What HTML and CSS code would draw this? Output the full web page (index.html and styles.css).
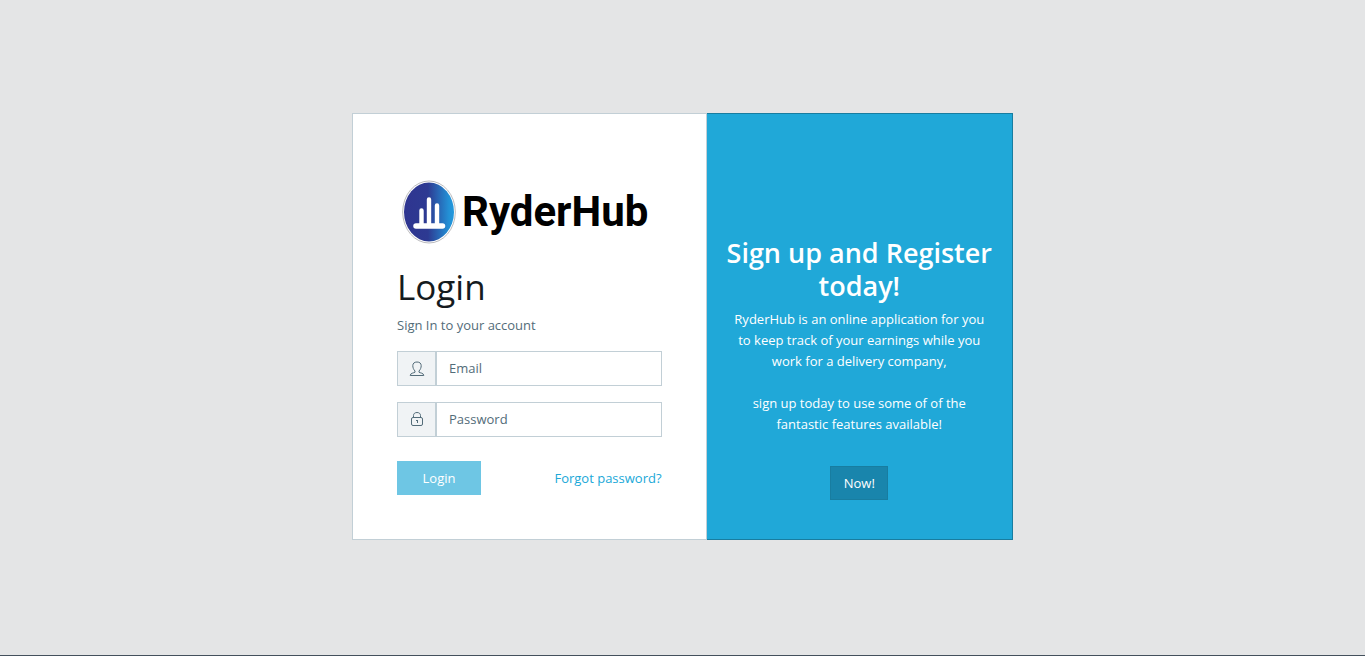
FILE: index.html
```html
<!DOCTYPE html>
<html lang="en">
<head>
<meta charset="utf-8">
<meta name="viewport" content="width=device-width, initial-scale=1">
<title>RyderHub - Login</title>
<link rel="stylesheet" href="styles.css">
</head>
<body>
<main class="page">
  <div class="card-group">
    <section class="card card-login">
      <div class="brand">
        <svg class="brand-mark" viewBox="0 0 54 64" aria-hidden="true">
          <defs>
            <linearGradient id="mark" x1="0" x2="1" y1="0" y2="0">
              <stop offset="0" stop-color="#2f3590"/>
              <stop offset=".48" stop-color="#2d3a92"/>
              <stop offset=".9" stop-color="#2391d6"/>
              <stop offset="1" stop-color="#2398dc"/>
            </linearGradient>
          </defs>
          <ellipse cx="27" cy="32" rx="26.3" ry="31" fill="#fff" stroke="#a9a9ad" stroke-width=".8"/>
          <ellipse cx="27" cy="32" rx="25" ry="29.5" fill="url(#mark)"/>
          <path d="M14 46H40.500" stroke="#fff" stroke-width="5.500" stroke-linecap="round"/>
          <path d="M19.500 45V30.500M27 45V19.500M35 45V25.500" stroke="#fff" stroke-width="4.400" stroke-linecap="round"/>
        </svg>
        <span class="brand-name">RyderHub</span>
      </div>
      <form class="login-form">
        <h1 class="title">Login</h1>
        <p class="subtitle">Sign In to your account</p>
        <div class="input-group">
          <label class="addon" for="email" aria-label="Email">
            <svg class="icon" viewBox="0 0 16 16" aria-hidden="true"><path d="M6 10C4.500 8.500 3.800 6.500 3.800 4.700C3.800 2.300 5.400 1 8 1S12.200 2.300 12.200 4.700C12.200 6.500 11.500 8.500 10 10V11.200C11 12 14.800 12 14.800 14.500H1.200C1.200 12 5 12 6 11.200Z"/></svg>
          </label>
          <input class="field" id="email" type="email" placeholder="Email">
        </div>
        <div class="input-group">
          <label class="addon" for="password" aria-label="Password">
            <svg class="icon" viewBox="0 0 16 16" aria-hidden="true"><rect x="2.500" y="5.500" width="11" height="8" rx="1.500"/><path d="M4.500 5.500V3.500C4.500 1.500 6 .500 8 .500S11.500 1.500 11.500 3.500V5.500M8.500 8V11M7 8.500H9"/></svg>
          </label>
          <input class="field" id="password" type="password" placeholder="Password">
        </div>
        <div class="actions">
          <button class="btn btn-login" type="submit" disabled>Login</button>
          <a class="forgot" href="#">Forgot password?</a>
        </div>
      </form>
    </section>
    <section class="card card-signup">
      <h2 class="signup-title">Sign up and Register today!</h2>
      <p class="signup-text">RyderHub is an online application for you to keep track of your earnings while you work for a delivery company,<br><br>sign up today to use some of of the fantastic features available!</p>
      <button class="btn btn-now" type="button">Now!</button>
    </section>
  </div>
</main>
</body>
</html>
```
FILE: styles.css
```css
*, *::before, *::after { box-sizing: border-box; }

body {
  margin: 0;
  font-family: "Open Sans", "Noto Sans", sans-serif;
  font-size: 13px;
  line-height: 21px;
  color: #151b1e;
  background: #e4e5e6;
}

.page {
  display: flex;
  align-items: center;
  justify-content: center;
  min-height: 100vh;
  padding-bottom: 2px;
  border-bottom: 1px solid #44505c;
}

.card-group {
  display: grid;
  grid-template-columns: minmax(0, 354fr) minmax(0, 306fr);
  width: 100%;
  max-width: 661px;
}

.card { border: 1px solid #c2cfd6; }

.card-login {
  padding: 44px;
  background: #fff;
}

.card-signup {
  display: flex;
  flex-direction: column;
  align-items: center;
  justify-content: flex-end;
  padding: 39px 20px;
  color: #fff;
  text-align: center;
  background: #20a8d8;
  border-color: #187da0;
  border-left: 0;
}

.brand {
  display: flex;
  align-items: center;
  gap: 6px;
  height: 108px;
  padding-left: 5px;
}

.brand-mark {
  flex: none;
  width: 54px;
  height: 64px;
}

.brand-name {
  font-family: Roboto, "Noto Sans", sans-serif;
  font-size: 42px;
  font-weight: 700;
  line-height: 54px;
  color: #000;
}

.title {
  margin: 0 0 7px;
  font-size: 35px;
  font-weight: 500;
  line-height: 42px;
}

.subtitle {
  margin: 0 0 15px;
  color: #536c79;
}

.input-group {
  display: flex;
  height: 35px;
  margin-bottom: 16px;
}

.addon {
  display: flex;
  align-items: center;
  justify-content: center;
  width: 39px;
  background: #f0f3f5;
  border: 1px solid #c2cfd6;
}

.icon {
  width: 16px;
  height: 16px;
  fill: none;
  stroke: #536c79;
}

.field {
  flex: 1;
  min-width: 0;
  padding: 0 12px;
  font: inherit;
  color: #3e515b;
  background: #fff;
  border: 1px solid #c2cfd6;
  border-radius: 0;
}

.field::placeholder { color: #536c79; opacity: 1; }

.actions {
  display: flex;
  align-items: center;
  justify-content: space-between;
  padding-top: 8px;
}

.btn {
  height: 34px;
  padding: 0 12px;
  font: inherit;
  font-weight: 500;
  color: #fff;
  border: 1px solid transparent;
}

.btn-login {
  width: 84px;
  background: #6ec6e4;
  border-color: #6ec6e4;
}

.forgot { color: #20a8d8; text-decoration: none; }

.signup-title {
  margin: 0 0 7px;
  font-size: 27px;
  font-weight: 600;
  line-height: 33px;
}

.signup-text { margin: 0 0 31px; font-weight: 500; }

.btn-now {
  width: 58px;
  background: #1985ac;
  border-color: #187da0;
}
```
